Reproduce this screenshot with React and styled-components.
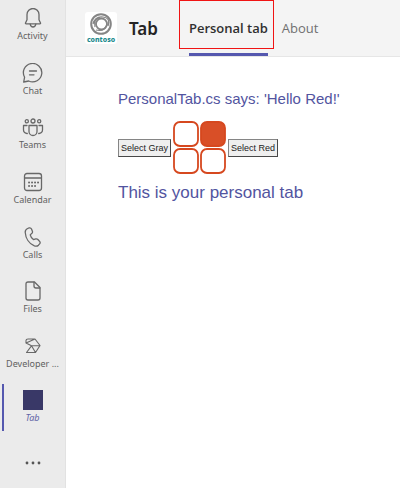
import { useState } from 'react';
import styled, { createGlobalStyle } from 'styled-components';

const GlobalStyle = createGlobalStyle`
    * {
        box-sizing: border-box;
    }

    body {
        margin: 0;
        background: #fff;
        font-family: 'Noto Sans', 'Open Sans', sans-serif;
    }
`;

const Page = styled.div`
    display: flex;
    min-height: 100vh;
`;

const Rail = styled.nav`
    display: flex;
    flex-direction: column;
    flex: 0 0 66px;
    background: #ebebeb;
    border-right: 1px solid #e2e2e2;
`;

const RailList = styled.ul`
    display: flex;
    flex: 1;
    flex-direction: column;
    margin: 0;
    padding: 0;
    list-style: none;
`;

const RailItem = styled.li`
    flex: 1;
    min-height: 50px;
    max-height: 56px;
`;

const RailLink = styled.a`
    position: relative;
    display: flex;
    flex-direction: column;
    align-items: center;
    padding-top: 8px;
    color: ${props => (props.$active ? '#6264a7' : '#616161')};
    font-size: 9px;
    font-style: ${props => (props.$active ? 'italic' : 'normal')};
    line-height: 16px;
    text-decoration: none;
    white-space: nowrap;

    &::before {
        content: '';
        display: ${props => (props.$active ? 'block' : 'none')};
        position: absolute;
        top: 2px;
        left: 2px;
        width: 2px;
        height: 47px;
        background: #5558af;
    }
`;

const RailIcon = styled.svg`
    width: 22px;
    height: 20px;
    fill: none;
    stroke: #686868;
    stroke-width: 1.3;
    stroke-linecap: round;
    stroke-linejoin: round;
`;

const MoreButton = styled.button`
    height: 51px;
    padding: 0;
    border: 0;
    background: none;
    line-height: 0;
`;

const Content = styled.div`
    flex: 1;
    min-width: 0;
`;

const Header = styled.header`
    display: flex;
    align-items: center;
    height: 57px;
    padding: 0 19px;
    background: #f4f4f4;
    border-bottom: 1px solid #e6e6e6;
`;

const Logo = styled.div`
    display: flex;
    flex-direction: column;
    align-items: center;
    width: 32px;
    height: 32px;
    border-radius: 3px;
    background: #fff;
    color: #1a8a8d;
    font-size: 7px;
    font-weight: 800;
    line-height: 7px;
`;

const Title = styled.h1`
    margin: 0 31px 0 12px;
    color: #242424;
    font-size: 17px;
    font-weight: 600;
`;

const Tabs = styled.nav`
    display: flex;
    align-self: stretch;
    gap: 14px;
    font-family: 'Open Sans', 'Noto Sans', sans-serif;
`;

const TabLink = styled.a`
    position: relative;
    display: flex;
    align-items: center;
    border-bottom: 3px solid ${props => (props.$active ? '#5558af' : 'transparent')};
    padding-top: 2px;
    color: ${props => (props.$active ? '#303030' : '#707070')};
    font-size: 13px;
    font-weight: ${props => (props.$active ? 600 : 400)};
    text-decoration: none;
    white-space: nowrap;
`;

const Highlight = styled.span`
    position: absolute;
    top: 0;
    right: -6px;
    bottom: 4px;
    left: -10px;
    border: 1px solid #f01414;
`;

const Main = styled.main`
    padding: 32px 52px;
    color: #5254a0;
    font-family: 'Liberation Sans', Arial, sans-serif;
`;

const Greeting = styled.p`
    margin: 0 0 12px;
    font-size: 15px;
    line-height: 20px;
`;

const Picker = styled.div`
    display: flex;
    align-items: center;
    gap: 2px;
`;

const PickButton = styled.button`
    padding: 2px;
    border: 1px solid;
    border-color: #858585 #484848 #484848 #858585;
    border-radius: 0;
    background: #efefef;
    color: #222;
    font-family: 'Liberation Sans', Arial, sans-serif;
    font-size: 9px;
    line-height: 12px;
    white-space: nowrap;
`;

const Squares = styled.svg`
    width: 53px;
    height: 53px;
    stroke: #d6481f;
    stroke-width: 1.8;
`;

const Message = styled.p`
    margin: 9px 0 0;
    font-size: 17px;
    line-height: 20px;
`;

const railItems = [
    {
        label: 'Activity',
        icon: (
            <>
                <path d="M3.5 15 L5 11.8 V6.5 A6 6 0 0 1 17 6.5 V11.8 L18.5 15 Q18.7 15.8 17.9 15.8 H4.1 Q3.3 15.8 3.5 15Z" />
                <path d="M8.2 16.2 Q8.7 19 11 19 T13.8 16.2" />
            </>
        ),
    },
    {
        label: 'Chat',
        icon: (
            <>
                <path d="M1.7 19 L2.6 14.2 A9.2 9.2 0 1 1 6.7 18Z" />
                <path d="M7.5 8 H14.5 M7.5 11.8 H12" />
            </>
        ),
    },
    {
        label: 'Teams',
        icon: (
            <>
                <circle cx="11" cy="4" r="2" />
                <circle cx="4.8" cy="4.3" r="1.6" />
                <circle cx="17.2" cy="4.3" r="1.6" />
                <path d="M7 8.5 H15 V14.5 A4 4 0 0 1 7 14.5Z" />
                <path d="M5 8.5 H1.5 V13 A3.5 3.5 0 0 0 5.3 16.5 M17 8.5 H20.5 V13 A3.5 3.5 0 0 1 16.7 16.5" />
            </>
        ),
    },
    {
        label: 'Calendar',
        icon: (
            <>
                <rect x="2.5" y="1.5" width="17" height="17" rx="2.5" />
                <path d="M3 6 H19" />
                <path
                    d="M10 10.5 H10.1 M13 10.5 H13.1 M16 10.5 H16.1 M7 10.5 H7.1 M7 14 H7.1 M10 14 H10.1 M13 14 H13.1"
                    strokeWidth="1.9"
                />
            </>
        ),
    },
    {
        label: 'Calls',
        icon: (
            <path d="M5.6 1.5 L7.2 .9 Q8.8 .5 9.5 2 L10.4 4.2 Q10.8 5.4 9.9 6.3 L8.2 7.9 Q8.8 10.4 11.4 12.6 L13.8 11.9 Q15 11.6 15.9 12.5 L17.8 14.7 Q18.6 15.8 17.6 16.9 L16.5 18.2 Q15 19.7 12.4 18.9 C7 16.7 3.6 11 3.2 5.2 Q3.2 2.5 5.6 1.5Z" />
        ),
    },
    {
        label: 'Files',
        icon: (
            <>
                <path d="M6 1 H12.5 L18 6.5 V17 Q18 19 16 19 H6 Q4 19 4 17 V3 Q4 1 6 1Z" />
                <path d="M12 1.2 V5 Q12 7 14 7 H17.8" />
            </>
        ),
    },
    {
        label: 'Developer ...',
        icon: (
            <path
                d="M4 7 V4.5 Q4 3 6 3 H13 L18 9.5 L13.5 16.5 H4.5 L9.5 9.8 L4 7 L13 3 M9.5 9.8 H18 M9.5 9.8 L13.5 16.5"
                strokeWidth="1.1"
            />
        ),
    },
    {
        label: 'Tab',
        active: true,
        icon: <rect x="1" y="0" width="20" height="20" fill="#393867" stroke="none" />,
    },
];

const ContosoLogo = () => (
    <Logo>
        <svg width="26" height="24" viewBox="0 0 26 24" fill="none" stroke="#858585" aria-hidden="true">
            <circle cx="13" cy="12" r="9.8" strokeWidth="2" />
            <circle cx="13.5" cy="12" r="5.5" strokeWidth="1.8" />
            <path d="M5 12 Q7 4 15 5 T20 14 M8 18 Q17 20 19 12 M7 15 Q5 7 12 6" strokeWidth="1.2" />
        </svg>
        contoso
    </Logo>
);

const App = () => {
    const [color, setColor] = useState('Red');
    const fill = color === 'Red' ? '#d94f27' : '#8c8c8c';

    return (
        <Page>
            <GlobalStyle />
            <Rail>
                <RailList>
                    {railItems.map(item => (
                        <RailItem key={item.label}>
                            <RailLink href="#" $active={item.active}>
                                <RailIcon viewBox="0 0 22 20" aria-hidden="true">{item.icon}</RailIcon>
                                {item.label}
                            </RailLink>
                        </RailItem>
                    ))}
                </RailList>
                <MoreButton aria-label="More apps">
                    <svg width="18" height="4" viewBox="0 0 18 4" fill="#555">
                        <circle cx="3" cy="2" r="1.4" />
                        <circle cx="9" cy="2" r="1.4" />
                        <circle cx="15" cy="2" r="1.4" />
                    </svg>
                </MoreButton>
            </Rail>
            <Content>
                <Header>
                    <ContosoLogo />
                    <Title>Tab</Title>
                    <Tabs>
                        <TabLink href="#" $active>
                            Personal tab
                            <Highlight />
                        </TabLink>
                        <TabLink href="#">About</TabLink>
                    </Tabs>
                </Header>
                <Main>
                    <Greeting>PersonalTab.cs says: 'Hello {color}!'</Greeting>
                    <Picker>
                        <PickButton onClick={() => setColor('Gray')}>Select Gray</PickButton>
                        <Squares viewBox="0 0 53 53" fill="#fff" aria-hidden="true">
                            <rect x="1" y="1" width="24" height="24" rx="6" />
                            <rect x="28" y="1" width="24" height="24" rx="6" fill={fill} />
                            <rect x="1" y="28" width="24" height="24" rx="6" />
                            <rect x="28" y="28" width="24" height="24" rx="6" />
                        </Squares>
                        <PickButton onClick={() => setColor('Red')}>Select Red</PickButton>
                    </Picker>
                    <Message>This is your personal tab</Message>
                </Main>
            </Content>
        </Page>
    );
};

export default App;
